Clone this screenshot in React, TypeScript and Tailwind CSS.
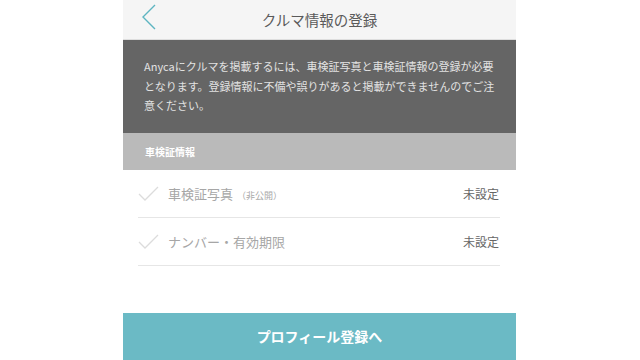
import React from "react";

const font = { fontFamily: '"Noto Sans CJK JP", "Noto Sans", sans-serif' };

function Check() {
  return (
    <svg width="22" height="18" viewBox="0 0 22 18" className="shrink-0">
      <polyline points="1,9 7,15 20,2" fill="none" stroke="#dcdcdc" strokeWidth="1.3" />
    </svg>
  );
}

function Row({ label, sub }: { label: string; sub?: string }) {
  return (
    <div className="ml-[15px] mr-[16px] h-[48px] flex items-center border-b border-[#e6e6e6]">
      <Check />
      <div className="ml-[8px] flex items-baseline">
        <span className="text-[13px] text-[#a6a6a6]">{label}</span>
        {sub && <span className="ml-[4px] text-[9px] text-[#a8a8a8]">{sub}</span>}
      </div>
      <span className="ml-auto mr-[1px] text-[12px] text-[#666666]">未設定</span>
    </div>
  );
}

export default function App() {
  return (
    <div className="w-[640px] h-[360px] bg-white overflow-hidden" style={font}>
      <div className="ml-[123px] w-[393px] h-full flex flex-col">
        <div className="h-[40px] bg-[#f5f5f5] border-b border-[#dedede] relative flex items-center justify-center shrink-0">
          <svg width="16" height="28" viewBox="0 0 16 28" className="absolute left-[19px] top-[4px]">
            <polyline points="13,1 1,13 13,25" fill="none" stroke="#5db5c1" strokeWidth="1.4" />
          </svg>
          <span className="text-[14.5px] text-[#5a5a5a]">クルマ情報の登録</span>
        </div>
        <div className="h-[93px] bg-[#656565] pl-[21px] pt-[17px] text-[11px] leading-[19.5px] text-[#e2e2e2] whitespace-nowrap shrink-0">
          Anycaにクルマを掲載するには、車検証写真と車検証情報の登録が必要
          <br />
          となります。登録情報に不備や誤りがあると掲載ができませんのでご注
          <br />
          意ください。
        </div>
        <div className="h-[37px] bg-[#bababa] pl-[22px] flex items-center text-[10px] font-bold text-white shrink-0">
          車検証情報
        </div>
        <Row label="車検証写真" sub="（非公開）" />
        <Row label="ナンバー・有効期限" />
        <div className="flex-1" />
        <div className="h-[47px] bg-[#6bbac5] flex items-center justify-center text-[14px] font-bold text-white shrink-0">
          プロフィール登録へ
        </div>
      </div>
    </div>
  );
}
